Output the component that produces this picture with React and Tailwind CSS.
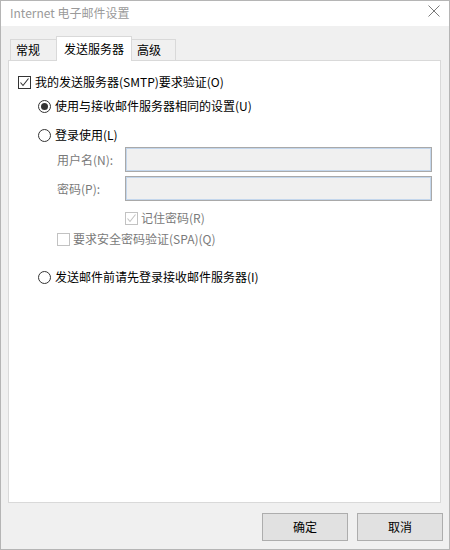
import React from "react";

const FONT = { fontFamily: '"Noto Sans CJK SC", "Noto Sans", sans-serif' };

function CheckBox({ checked, disabled }) {
  const c = disabled ? "#c2c2c2" : "#333333";
  return (
    <span
      className={`flex-none w-[13px] h-[13px] border bg-white flex items-center justify-center ${disabled ? "border-[#c2c2c2]" : "border-[#333333]"}`}
    >
      {checked && (
        <svg width="11" height="11" viewBox="0 0 11 11">
          <path d="M1.5 5.5 L4 8.5 L9.5 1.5" fill="none" stroke={c} strokeWidth="1.1" />
        </svg>
      )}
    </span>
  );
}

function Radio({ checked }) {
  return (
    <span className="flex-none w-[13px] h-[13px] rounded-full border border-[#333333] bg-white flex items-center justify-center">
      {checked && <span className="w-[7px] h-[7px] rounded-full bg-[#333333]" />}
    </span>
  );
}

function Input() {
  return (
    <div className="w-[307px] h-[25px] border border-[#a9a9a9] bg-[#f0f0f0] shadow-[inset_0_0_0_1px_#c3d6ec]" />
  );
}

export default function App() {
  return (
    <div
      style={FONT}
      className="w-[450px] h-[550px] border border-[#b5b5b5] bg-[#f0f0f0] flex flex-col text-[12px] text-black"
    >
      {/* title bar */}
      <div className="h-[25px] bg-white flex justify-between items-start pl-[9px] pr-[9px]">
        <span className="mt-[4px] leading-[15px] text-[#9a9a9a] text-[12px]">Internet 电子邮件设置</span>
        <svg className="mt-[4px]" width="12" height="12" viewBox="0 0 12 12">
          <path d="M0.5 0.5 L11.5 11.5 M11.5 0.5 L0.5 11.5" stroke="#7a7a7a" strokeWidth="1" fill="none" />
        </svg>
      </div>

      <div className="flex-1 flex flex-col pt-[10px] pl-[7px] pr-[8px] pb-[8px]">
        {/* tabs */}
        <div className="h-[24px] flex items-end pl-[2px] relative z-10">
          <div className="w-[47px] h-[21px] border border-b-0 border-[#d9d9d9] bg-[#f0f0f0] flex items-center pl-[5px]">
            常规
          </div>
          <div className="w-[76px] h-[25px] -ml-[1px] -mb-[1px] border border-b-0 border-[#d9d9d9] bg-white flex items-center pl-[7px]">
            发送服务器
          </div>
          <div className="w-[45px] h-[21px] -ml-[1px] border border-b-0 border-[#d9d9d9] bg-[#f0f0f0] flex items-center pl-[5px]">
            高级
          </div>
        </div>

        {/* panel */}
        <div className="h-[443px] border border-[#d9d9d9] bg-white flex flex-col">
          <div className="h-[20px] mt-[11px] ml-[9px] flex items-center gap-[4px]">
            <CheckBox checked />
            <span>我的发送服务器(SMTP)要求验证(O)</span>
          </div>
          <div className="h-[20px] mt-[4px] ml-[29px] flex items-center gap-[4px]">
            <Radio checked />
            <span>使用与接收邮件服务器相同的设置(U)</span>
          </div>
          <div className="h-[20px] mt-[9px] ml-[29px] flex items-center gap-[4px]">
            <Radio />
            <span>登录使用(L)</span>
          </div>
          <div className="mt-[2px] ml-[48px] flex items-center">
            <span className="w-[68px] text-[#7a7a7a]">用户名(N):</span>
            <Input />
          </div>
          <div className="mt-[4px] ml-[48px] flex items-center">
            <span className="w-[68px] text-[#7a7a7a]">密码(P):</span>
            <Input />
          </div>
          <div className="h-[20px] mt-[7px] ml-[116px] flex items-center gap-[3px]">
            <CheckBox checked disabled />
            <span className="text-[#7a7a7a]">记住密码(R)</span>
          </div>
          <div className="h-[20px] mt-[1px] ml-[48px] flex items-center gap-[3px]">
            <CheckBox disabled />
            <span className="text-[#7a7a7a]">要求安全密码验证(SPA)(Q)</span>
          </div>
          <div className="h-[20px] mt-[18px] ml-[29px] flex items-center gap-[4px]">
            <Radio />
            <span>发送邮件前请先登录接收邮件服务器(I)</span>
          </div>
        </div>

        {/* buttons */}
        <div className="mt-[10px] flex justify-end gap-[9px] -mr-[2px]">
          <button className="w-[86px] h-[28px] border border-[#adadad] bg-[#e1e1e1] text-[12px] text-black">
            确定
          </button>
          <button className="w-[86px] h-[28px] border border-[#adadad] bg-[#e1e1e1] text-[12px] text-black">
            取消
          </button>
        </div>
      </div>
    </div>
  );
}
